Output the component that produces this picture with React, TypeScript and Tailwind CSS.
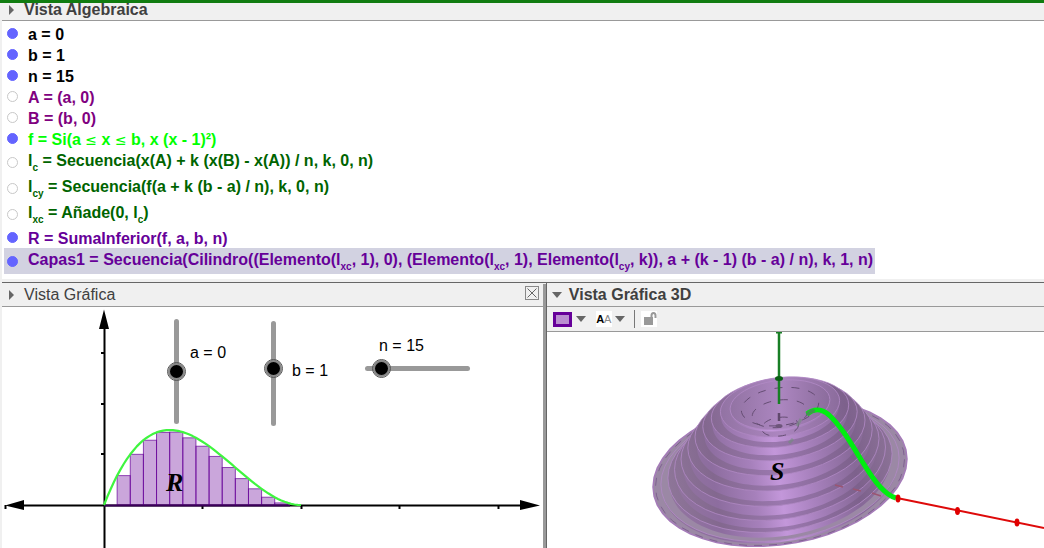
import { useState } from "react";
import type { ReactNode } from "react";

type Row = {
  id: string;
  on: boolean;
  color: string;
  tall?: boolean;
  selected?: boolean;
  text: ReactNode;
};

function Sub({ children }: { children: ReactNode }) {
  return <sub className="static align-[-5px] text-[10px] leading-none">{children}</sub>;
}

function Leq() {
  return <span className="font-['DejaVu_Sans',sans-serif] text-[14px] leading-none font-normal">≤</span>;
}

const rows: Row[] = [
  { id: "a", on: true, color: "text-black", text: "a = 0" },
  { id: "b", on: true, color: "text-black", text: "b = 1" },
  { id: "n", on: true, color: "text-black", text: "n = 15" },
  { id: "A", on: false, color: "text-[#800080]", text: "A = (a, 0)" },
  { id: "B", on: false, color: "text-[#800080]", text: "B = (b, 0)" },
  {
    id: "f",
    on: true,
    color: "text-[#00ff00]",
    text: <>f = Si(a <Leq /> x <Leq /> b, x (x - 1)²)</>,
  },
  {
    id: "lc",
    on: false,
    color: "text-[#006400]",
    tall: true,
    text: <>l<Sub>c</Sub> = Secuencia(x(A) + k (x(B) - x(A)) / n, k, 0, n)</>,
  },
  {
    id: "lcy",
    on: false,
    color: "text-[#006400]",
    tall: true,
    text: <>l<Sub>cy</Sub> = Secuencia(f(a + k (b - a) / n), k, 0, n)</>,
  },
  {
    id: "lxc",
    on: false,
    color: "text-[#006400]",
    tall: true,
    text: <>l<Sub>xc</Sub> = Añade(0, l<Sub>c</Sub>)</>,
  },
  { id: "R", on: true, color: "text-[#660099]", text: "R = SumaInferior(f, a, b, n)" },
  {
    id: "Capas1",
    on: true,
    color: "text-[#660099]",
    tall: true,
    selected: true,
    text: (
      <>
        Capas1 = Secuencia(Cilindro((Elemento(l<Sub>xc</Sub>, 1), 0), (Elemento(l<Sub>xc</Sub>, 1), Elemento(l
        <Sub>cy</Sub>, k)), a + (k - 1) (b - a) / n), k, 1, n)
      </>
    ),
  },
];

const N = 15;
const f = (x: number) => x * (x - 1) * (x - 1);

/* ---------- Vista Algebraica ---------- */

function AlgebraRow({ row }: { row: Row }) {
  const [on, setOn] = useState(row.on);
  return (
    <li
      className={`ml-[2px] flex w-fit gap-[10px] pl-[3px] pr-[2px] ${row.tall ? "h-[26px]" : "h-[21px]"} ${
        row.selected ? "bg-[#d2d2e1]" : ""
      }`}
    >
      <input
        id={`obj-${row.id}`}
        type="checkbox"
        checked={on}
        onChange={() => setOn(!on)}
        className="size-[11px] shrink-0 appearance-none self-center rounded-full border border-[#c8c8c8] bg-white checked:border-[#6464ff] checked:bg-[#6464ff]"
      />
      <label htmlFor={`obj-${row.id}`} className={`whitespace-nowrap leading-[24px] font-bold ${row.color}`}>
        {row.text}
      </label>
    </li>
  );
}

/* ---------- Vista Gráfica ---------- */

const X0 = 104;
const Y0 = 505;
const UX = 197;
const UY = 506;

function Graph() {
  const curve = Array.from({ length: 61 }, (_, i) => {
    const x = i / 60;
    return `${(X0 + UX * x).toFixed(1)},${(Y0 - UY * f(x)).toFixed(1)}`;
  }).join(" ");

  return (
    <svg width="541" height="241" viewBox="2 307 541 241" className="block max-w-none" role="img" aria-label="Vista Gráfica">
      {/* Axes */}
      <g stroke="#000" strokeWidth="2">
        <path d="M104.500 322V548M20 505.500H526" />
        <path d="M101 353H104M101 404H104M101 454H104M5.500 505V509M202.500 505V509M301.500 505V509M399.500 505V509M498.500 505V509" />
      </g>
      <path d="M104 309.500 109 329H99ZM5 505.500 24 500V510ZM540 505.500 520 500V510Z" />

      {/* Lower sum */}
      {Array.from({ length: N }, (_, k) => {
        const h = Math.min(f(k / N), f((k + 1) / N)) * UY;
        return (
          <rect
            key={k}
            x={X0 + (UX * k) / N}
            y={Y0 - h}
            width={UX / N}
            height={h}
            fill="#660099"
            fillOpacity="0.35"
            stroke="#660099"
            strokeWidth="1"
            strokeOpacity="0.7"
          />
        );
      })}
      <path d="M104 505.500H290" stroke="#3a0058" strokeWidth="2" />
      <polyline points={curve} fill="none" stroke="#40f540" strokeWidth="2.200" strokeLinejoin="round" />
      <text x="166" y="491" fontSize="26" fontWeight="bold" fontStyle="italic" fontFamily="'Liberation Serif', serif">
        R
      </text>
    </svg>
  );
}

const thumb =
  "[&::-webkit-slider-thumb]:size-[17px] [&::-webkit-slider-thumb]:appearance-none [&::-webkit-slider-thumb]:rounded-full [&::-webkit-slider-thumb]:border-[2px] [&::-webkit-slider-thumb]:border-[#888] [&::-webkit-slider-thumb]:bg-black [&::-webkit-slider-thumb]:outline [&::-webkit-slider-thumb]:outline-[#555]";
const track =
  "appearance-none [&::-webkit-slider-runnable-track]:rounded-full [&::-webkit-slider-runnable-track]:bg-[#999]";

function Sliders() {
  const [a, setA] = useState(0);
  const [b, setB] = useState(1);
  const [n, setN] = useState(15);
  const vertical = `${track} ${thumb} absolute h-[105px] w-[17px] [direction:rtl] [writing-mode:vertical-lr] [&::-webkit-slider-runnable-track]:w-[5px] [&::-webkit-slider-thumb]:ml-[-6px]`;
  return (
    <>
      <input id="sa" type="range" min={-5} max={5} value={a} onChange={(e) => setA(+e.target.value)} className={`${vertical} left-[166px] top-[12px]`} />
      <label htmlFor="sa" className="absolute left-[188px] top-[35px] leading-[22px]">a = {a}</label>
      <input id="sb" type="range" min={-9} max={9} value={b} onChange={(e) => setB(+e.target.value)} className={`${vertical} left-[263px] top-[14px]`} />
      <label htmlFor="sb" className="absolute left-[290px] top-[53px] leading-[22px]">b = {b}</label>
      <input
        id="sn"
        type="range"
        min={1}
        max={160}
        value={n}
        onChange={(e) => setN(+e.target.value)}
        className={`${track} ${thumb} absolute left-[363px] top-[53px] h-[17px] w-[105px] [&::-webkit-slider-runnable-track]:h-[5px] [&::-webkit-slider-thumb]:mt-[-6px]`}
      />
      <label htmlFor="sn" className="absolute left-[377px] top-[28px] leading-[22px]">n = {n}</label>
    </>
  );
}

/* ---------- Vista Gráfica 3D ---------- */

// projects a point of the solid, given by radius, angle and height;
// what is nearer to the viewer is stretched a little
function project(r: number, t: number, z: number) {
  const sin = Math.sin(t);
  const s = sin > 0 ? r + 0.5 * r * r * r * (1 - r) : r;
  const x = 780 + 127 * r * (1 + 1.2 * z) * Math.cos(t);
  const y = 473 - 464 * z - 14 * r * Math.cos(t) + 72 * s * sin;
  return `${x.toFixed(1)} ${y.toFixed(1)}`;
}

function arc(r: number, z: number, from: number, to: number) {
  return Array.from({ length: 49 }, (_, i) => project(r, from + ((to - from) * i) / 48, z));
}

const ring = (r: number, z: number) => `M${arc(r, z, 0, Math.PI * 2).join("L")}Z`;
const wall = (r: number, top: number, bottom: number) =>
  `M${arc(r, top, 0, Math.PI).join("L")}L${arc(r, bottom, Math.PI, 0).join("L")}Z`;

function Solid() {
  const steps = [14, 13, 12, 11, 10, 9, 8, 7, 6, 5];
  return (
    <svg width="497" height="216" viewBox="547 332 497 216" className="block max-w-none" role="img" aria-label="Vista Gráfica 3D">
      <defs>
        <linearGradient id="wall" gradientUnits="userSpaceOnUse" x1="652" y1="500" x2="906" y2="460">
          <stop offset="0" stopColor="#94789f" />
          <stop offset="0.250" stopColor="#8d6d9f" />
          <stop offset="0.400" stopColor="#a680bb" />
          <stop offset="0.500" stopColor="#c397da" />
          <stop offset="0.620" stopColor="#a982bf" />
          <stop offset="0.800" stopColor="#876998" />
          <stop offset="1" stopColor="#907599" />
        </linearGradient>
        <linearGradient id="step" gradientUnits="userSpaceOnUse" x1="652" y1="500" x2="906" y2="460">
          <stop offset="0" stopColor="#927b9c" />
          <stop offset="0.250" stopColor="#83688f" />
          <stop offset="0.500" stopColor="#9b78af" />
          <stop offset="0.800" stopColor="#7d618c" />
          <stop offset="1" stopColor="#8f7799" />
        </linearGradient>
        <linearGradient id="crater" x1="0" y1="0" x2="1" y2="0">
          <stop offset="0" stopColor="#9273a3" />
          <stop offset="0.500" stopColor="#ac86c0" />
          <stop offset="1" stopColor="#8b6c9c" />
        </linearGradient>
      </defs>

      <path d={ring(1, 0)} fill="#9b88a5" stroke="#a57bb9" strokeWidth="1.500" />
      <path d={ring(0.98, 0)} fill="none" stroke="#7f6091" strokeWidth="1" strokeDasharray="8 7" />
      {steps.map((k) => {
        const r = k / N;
        const z = f(r);
        return (
          <g key={k}>
            <path d={wall(r, z, f((k + 1) / N))} fill="url(#wall)" />
            <path
              d={ring(r, z)}
              fill={k === 14 ? "#9b88a5" : k < 7 ? "url(#crater)" : "url(#step)"}
              stroke="#b18ac6"
              strokeWidth="1"
              strokeOpacity="0.8"
            />
          </g>
        );
      })}

      {/* Hidden edges seen through the top */}
      <g fill="none" stroke="#654d73" strokeWidth="1" strokeDasharray="8 9">
        <path d={ring(0.26, f(0.267))} />
        <path d={ring(0.19, f(0.2))} />
        <path d={ring(0.13, f(0.133))} />
      </g>

      {/* Vertical axis */}
      <path d="M779 332V404" stroke="#187f25" strokeWidth="2.500" />
      <path d="M776 332.500H782" stroke="#187f25" strokeWidth="2" />
      <ellipse cx="779" cy="378.500" rx="4" ry="2.500" fill="#0a5f14" />
      <path d="M779 413V421" stroke="#60496c" strokeWidth="2.500" />
      <ellipse cx="779" cy="426" rx="3.500" ry="2" fill="#6d557a" />
      <path d="M801 419 797 426M793 439 789 443" stroke="#718c7b" strokeWidth="3" strokeOpacity="0.600" />

      {/* Horizontal axis */}
      <path d="M835 485 843 487M853 489 861 491M872 493 881 496" stroke="#9b5572" strokeWidth="1.500" />
      <path d="M897 498 1044 528" stroke="#de0a0a" strokeWidth="2" />
      <g fill="#e00000">
        <ellipse cx="957.500" cy="511" rx="2.500" ry="4" />
        <ellipse cx="1017" cy="522.500" rx="2.500" ry="4" />
      </g>

      <path d="M807 414C814 408 822 409 829 415C852 436 867 479 888 494Q892 497 896 498" fill="none" stroke="#00ee10" strokeWidth="5" />
      <path d="M808 413.500Q811 411 813 411" fill="none" stroke="#3c9a4a" strokeWidth="4" strokeLinecap="round" />
      <ellipse cx="898" cy="498.500" rx="2.500" ry="4" fill="#e00000" />
      <text x="770" y="480" fontSize="26" fontWeight="bold" fontStyle="italic" fontFamily="'Liberation Serif', serif">
        S
      </text>
    </svg>
  );
}

/* ---------- Shared bits ---------- */

function Down() {
  return (
    <svg width="10" height="6" viewBox="0 0 10 6" className="shrink-0">
      <path d="M0 0H10L5 6Z" fill="#666" />
    </svg>
  );
}

function Right() {
  return (
    <svg width="5" height="10" viewBox="0 0 5 10" className="shrink-0">
      <path d="M0 0V10L5 5Z" fill="#666" />
    </svg>
  );
}

export default function App() {
  return (
    <div className="flex h-screen flex-col overflow-hidden bg-[#f0f0f0] font-['Liberation_Sans',Arial,sans-serif] text-[16px] text-black">
      <div className="h-[3px] shrink-0 bg-[#107c10]" />

      <section className="ml-[2px] shrink-0 bg-white">
        <header className="flex h-[18px] items-center border-b border-[#999] bg-[#f0f0f0] pl-[7px] text-[#404040]">
          <button type="button" className="flex items-center gap-[10px] pb-[3px]">
            <Right />
            <h2 className="font-bold leading-[18px]">Vista Algebraica</h2>
          </button>
        </header>
        <ul className="pb-[5px] pt-[2px]">
          {rows.map((row) => (
            <AlgebraRow key={row.id} row={row} />
          ))}
        </ul>
      </section>

      <div className="ml-[2px] mt-[3px] flex min-h-0 flex-1 border-t border-[#666]">
        <section className="flex w-[51.9%] shrink-0 flex-col overflow-hidden">
          <header className="flex h-[24px] shrink-0 items-center justify-between border-b border-[#999] pl-[7px] pr-[4px] text-[#404040]">
            <button type="button" className="flex items-center gap-[10px]">
              <Right />
              <h2 className="leading-[24px]">Vista Gráfica</h2>
            </button>
            <button type="button" aria-label="Cerrar" className="mb-[4px] size-[14px] border border-[#888]">
              <svg width="12" height="12" viewBox="0 0 12 12">
                <path d="M1.500 1.500 10.500 10.500M10.500 1.500 1.500 10.500" stroke="#666" />
              </svg>
            </button>
          </header>
          <div className="relative flex-1 overflow-hidden bg-white">
            <Graph />
            <Sliders />
          </div>
        </section>

        <div className="mt-[1px] w-[3px] shrink-0 bg-[#999]" />

        <section className="flex min-w-0 flex-1 flex-col overflow-hidden border-l border-[#666]">
          <header className="flex h-[24px] shrink-0 items-center border-b border-[#999] pl-[5px] text-[#404040]">
            <button type="button" className="flex items-center gap-[7px]">
              <Down />
              <h2 className="font-bold leading-[24px]">Vista Gráfica 3D</h2>
            </button>
          </header>
          <div className="flex h-[25px] shrink-0 items-center border-b border-[#999] pl-[6px]">
            <button type="button" aria-label="Color" className="flex items-center gap-[4px]">
              <span className="h-[15px] w-[19px] border-[3px] border-[#660099] bg-[#ba8fd0]" />
              <Down />
            </button>
            <button type="button" aria-label="Estilo de texto" className="ml-[10px] flex items-center gap-[3px]">
              <span className="flex size-[16px] items-center justify-center bg-white text-[11px] leading-none">
                <span className="font-bold">A</span>
                <span className="text-[#888]">A</span>
              </span>
              <Down />
            </button>
            <span className="ml-[9px] h-[18px] w-px bg-[#777]" />
            <button type="button" aria-label="Desbloquear" className="ml-[6px] size-[16px] bg-white">
              <svg width="16" height="16" viewBox="0 0 16 16">
                <path d="M3 6H12V14H3Z" fill="#999" />
                <path d="M10.500 6V4.500Q10.500 2 12.500 2T14.500 4.500V7" fill="none" stroke="#999" strokeWidth="2" />
              </svg>
            </button>
          </div>
          <div className="flex-1 overflow-hidden bg-white">
            <Solid />
          </div>
        </section>
      </div>
    </div>
  );
}
